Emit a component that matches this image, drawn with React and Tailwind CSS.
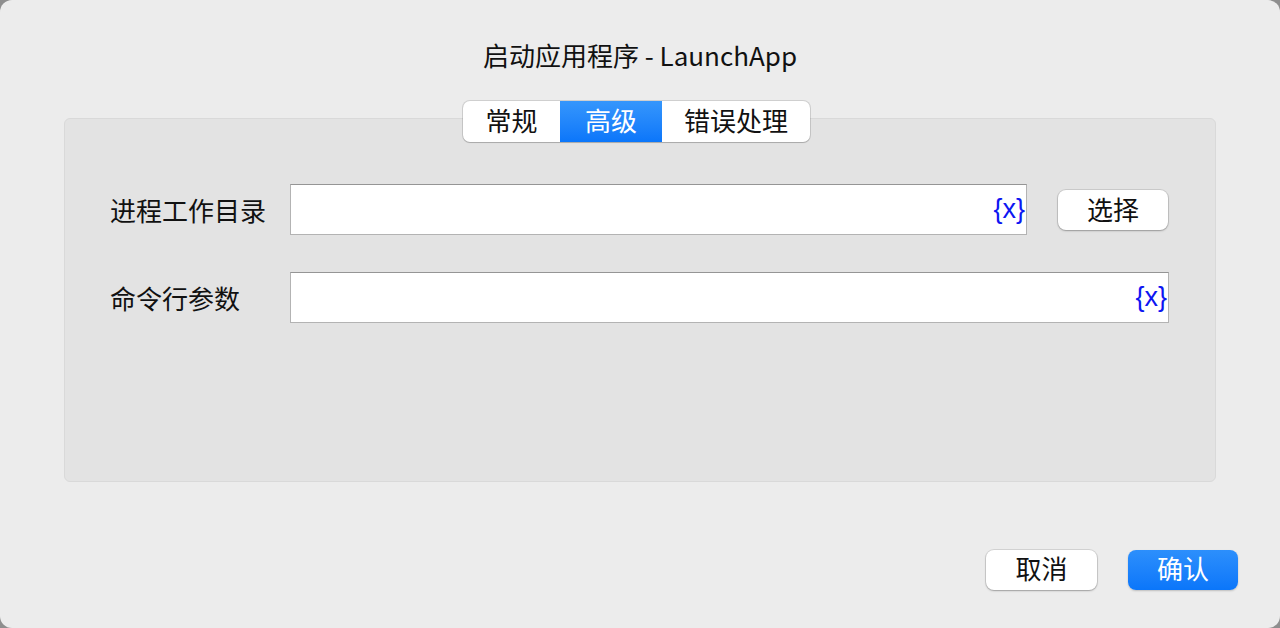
import React from "react";

const font = { fontFamily: "'Noto Sans CJK SC', 'Noto Sans', sans-serif" };

function VarTag() {
  return (
    <span className="text-[27px] leading-none text-[#0d16f2]" style={{ fontFamily: "'Liberation Sans', 'Noto Sans', sans-serif" }}>
      {"{x}"}
    </span>
  );
}

function Field({ width }) {
  return (
    <div
      className={`${width} h-[51px] bg-white border border-[#b3b3b3] border-t-[#959595] flex items-center justify-end pr-[1px]`}
    >
      <VarTag />
    </div>
  );
}

export default function App() {
  return (
    <div className="w-[1280px] h-[628px] bg-[#8e8e8e]" style={font}>
      <div className="w-full h-full rounded-[12px] bg-[#ececec] flex flex-col text-[#111]">
        {/* Title */}
        <div className="h-[114px] pt-[38px] flex justify-center">
          <span className="text-[26px] leading-[34px]">启动应用程序 - LaunchApp</span>
        </div>

        {/* Panel with tabs */}
        <div className="relative mx-[64px] mt-[4px] h-[364px] bg-[#e3e3e3] border border-[#d9d9d9] rounded-[6px]">
          <div className="absolute left-[398px] -top-[18px] flex h-[41px] rounded-[7px] bg-white shadow-[0_0_0_1px_rgba(0,0,0,0.12),0_1px_1px_rgba(0,0,0,0.15)] overflow-hidden text-[26px] leading-none">
            <div className="w-[97px] pb-[3px] flex items-center justify-center">常规</div>
            <div className="w-[102px] pb-[3px] flex items-center justify-center text-white bg-gradient-to-b from-[#3596fc] to-[#0a76fa]">高级</div>
            <div className="w-[148px] pb-[3px] flex items-center justify-center">错误处理</div>
          </div>

          <div className="pt-[65px] pl-[45px] flex flex-col gap-[37px]">
            <div className="flex items-center">
              <span className="w-[180px] text-[26px] leading-none">进程工作目录</span>
              <Field width="w-[737px]" />
              <button className="ml-[31px] w-[110px] h-[40px] pb-[2px] rounded-[8px] bg-white shadow-[0_0_0_1px_rgba(0,0,0,0.1),0_1px_2px_rgba(0,0,0,0.25)] text-[26px] leading-none">
                选择
              </button>
            </div>
            <div className="flex items-center">
              <span className="w-[180px] text-[26px] leading-none">命令行参数</span>
              <Field width="w-[879px]" />
            </div>
          </div>
        </div>

        {/* Footer */}
        <div className="flex justify-end gap-[31px] pr-[42px] mt-[68px]">
          <button className="w-[111px] h-[40px] pb-[4px] rounded-[8px] bg-white shadow-[0_0_0_1px_rgba(0,0,0,0.1),0_1px_2px_rgba(0,0,0,0.25)] text-[26px] leading-none">
            取消
          </button>
          <button className="w-[110px] h-[40px] pb-[4px] rounded-[8px] bg-gradient-to-b from-[#2c8ffc] to-[#0a76fa] shadow-[0_1px_2px_rgba(0,0,0,0.2)] text-[26px] leading-none text-white">
            确认
          </button>
        </div>
      </div>
    </div>
  );
}
